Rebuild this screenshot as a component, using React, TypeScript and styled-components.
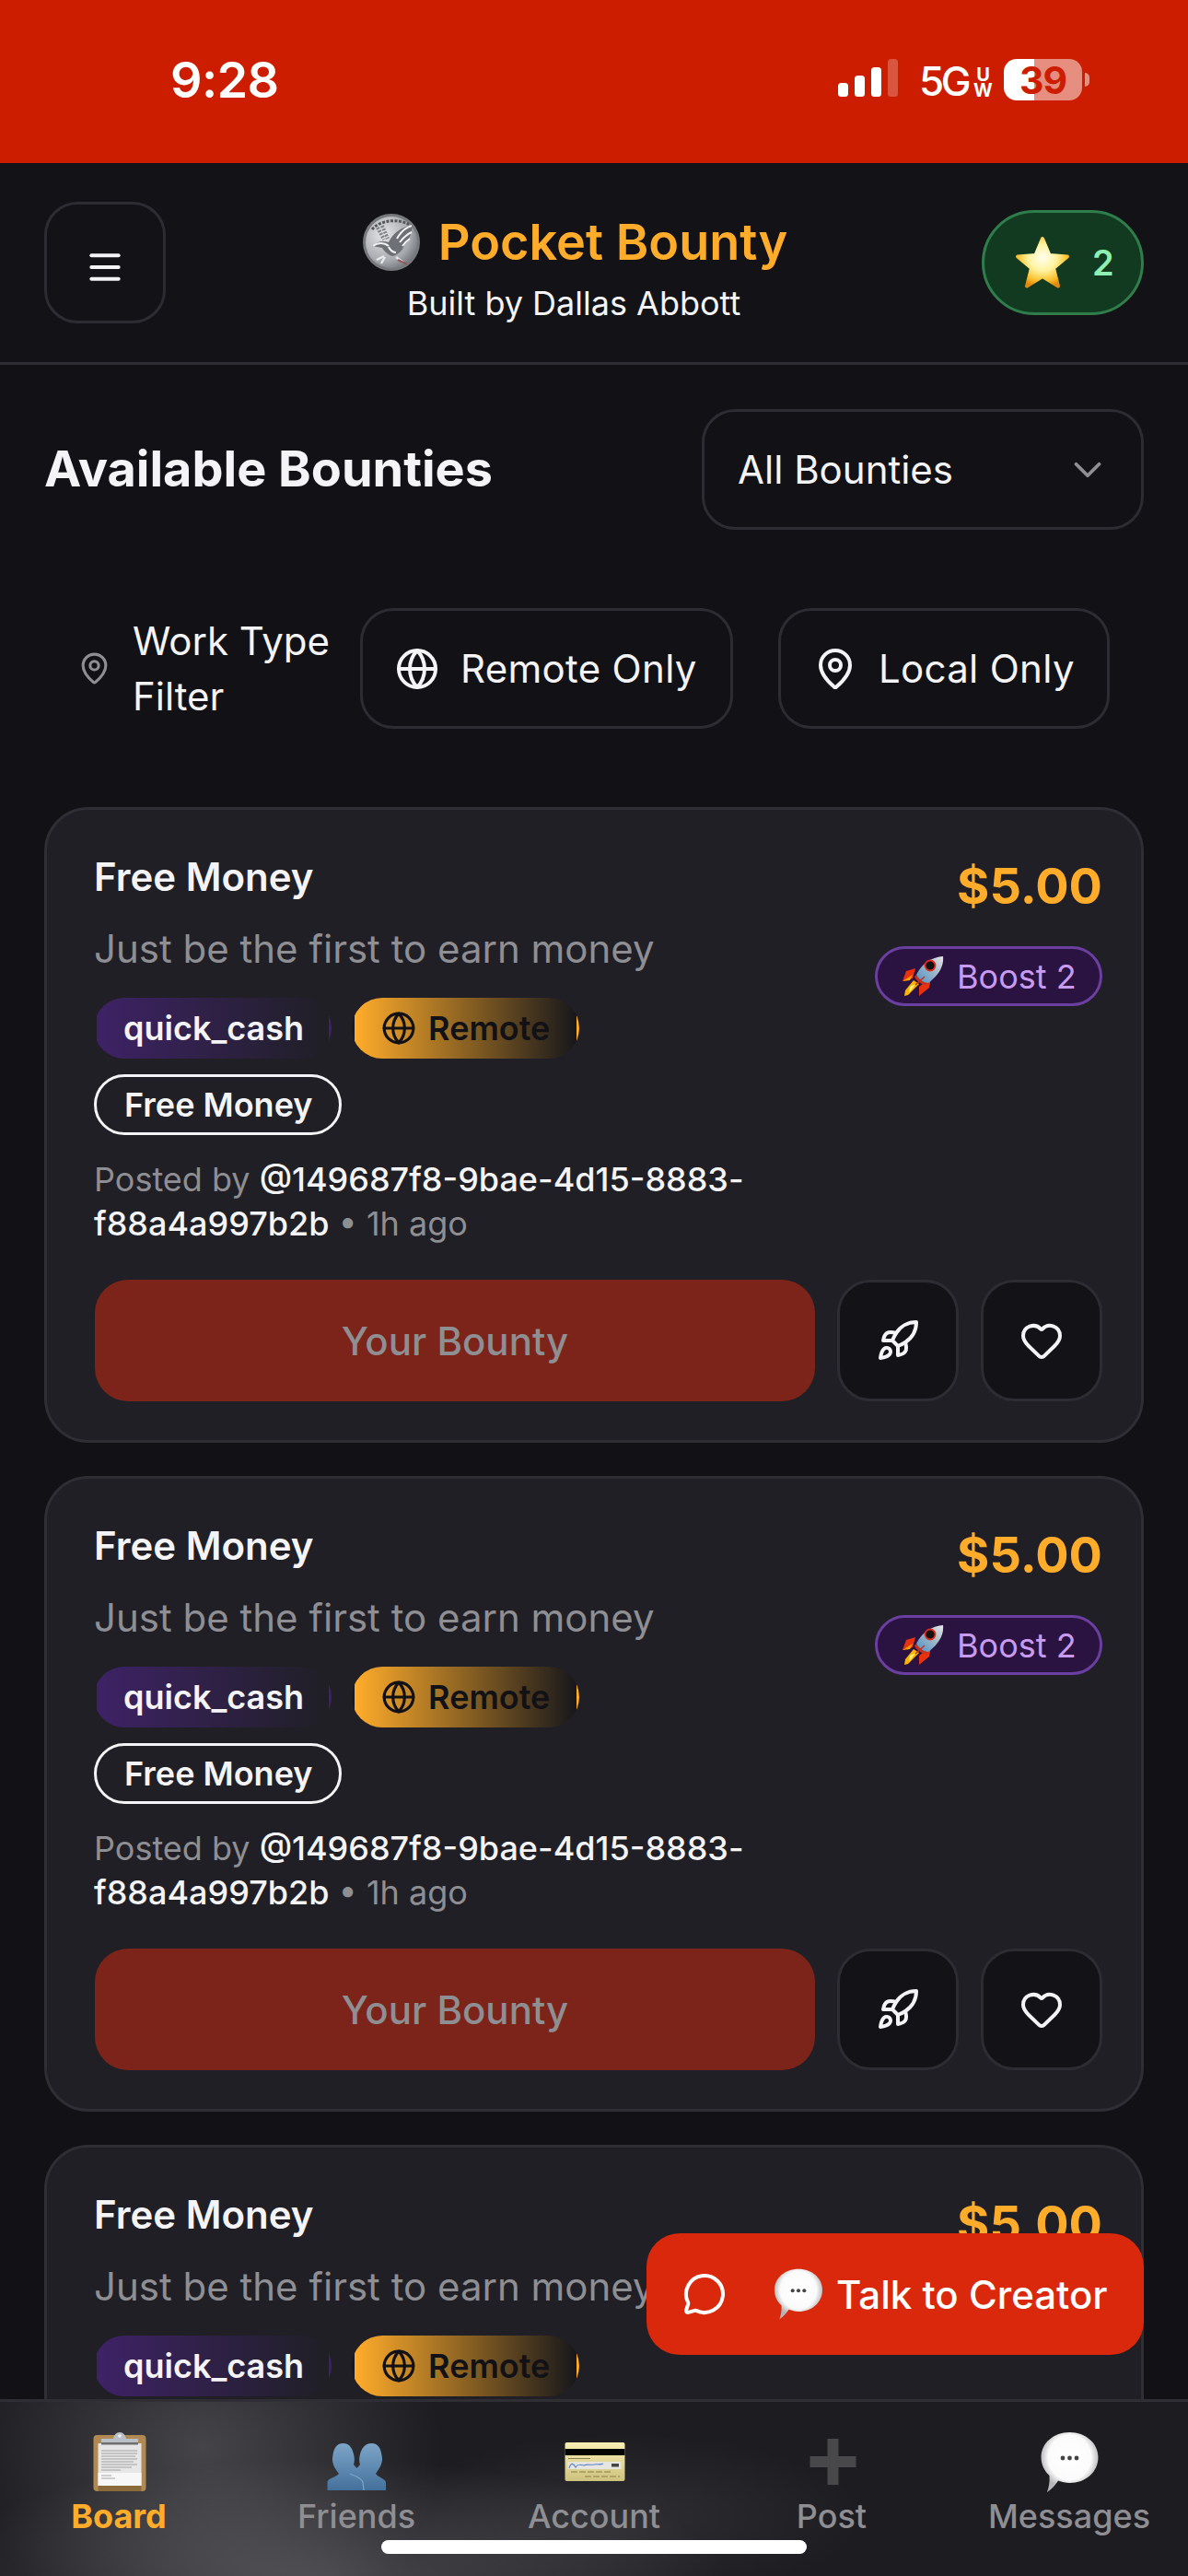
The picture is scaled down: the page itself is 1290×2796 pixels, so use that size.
import React from "react";
import styled, { createGlobalStyle } from "styled-components";
import { ChevronDown, Globe, Heart, MapPin, Menu, MessageCircle, Rocket } from "lucide-react";

const Global = createGlobalStyle`
  html, body { margin: 0; padding: 0; background: #111116; }
  * { box-sizing: border-box; }
  body { font-family: Inter, "Liberation Sans", sans-serif; color: #f4f4f6; }
`;

const Page = styled.div`
  position: relative;
  width: 1290px;
  height: 2796px;
  overflow: hidden;
  background: #111116;
`;

const StatusBar = styled.div`
  height: 177px;
  background: #cc1d00;
  display: flex;
  justify-content: space-between;
  padding: 64px 115px 0 185px;
`;
const Time = styled.div`
  font-size: 54px;
  font-weight: 600;
  line-height: 45px;
  color: #fff;
  letter-spacing: -0.6px;
`;
const StatusRight = styled.div`
  display: flex;
  align-items: flex-start;
  height: 45px;
`;
const Signal = styled.svg`
  width: 65px;
  height: 43px;
`;
const NetLabel = styled.div`
  display: flex;
  align-items: flex-end;
  margin-left: 23px;
  width: 70px;
  height: 43px;
  color: #fff;
`;
const FiveG = styled.span`
  font-size: 44px;
  font-weight: 500;
  line-height: 38px;
  letter-spacing: -3.5px;
`;
const UW = styled.span`
  display: flex;
  flex-direction: column;
  align-items: center;
  font-size: 20px;
  font-weight: 700;
  line-height: 17px;
  margin-left: 6px;
`;
const Battery = styled.div`
  position: relative;
  width: 85px;
  height: 45px;
  margin-left: 22px;
  border-radius: 14px;
  background: linear-gradient(90deg, #fff 0 39%, rgba(255, 255, 255, 0.5) 39%);
  display: flex;
  align-items: center;
  justify-content: center;
  color: #cc1d00;
  font-size: 41px;
  font-weight: 700;
  letter-spacing: -1px;
  &::after {
    content: "";
    position: absolute;
    right: -8px;
    top: 15px;
    width: 5px;
    height: 15px;
    border-radius: 0 5px 5px 0;
    background: rgba(255, 255, 255, 0.5);
  }
`;

const Header = styled.header`
  height: 219px;
  border-bottom: 3px solid #2c2c32;
  background: #121217;
  display: flex;
  align-items: center;
  padding: 0 48px;
`;
const MenuButton = styled.button`
  width: 132px;
  height: 132px;
  flex: none;
  border: 3px solid #2c2c32;
  border-radius: 36px;
  background: transparent;
  color: #f4f4f6;
  display: flex;
  align-items: center;
  justify-content: center;
  padding: 10px 0 0;
`;
const Brand = styled.div`
  flex: 1;
  align-self: flex-start;
  margin-top: 55px;
  display: flex;
  flex-direction: column;
  align-items: center;
`;
const BrandRow = styled.div`
  display: flex;
  align-items: center;
  gap: 20px;
  height: 62px;
  margin-left: 3px;
`;
const BrandTitle = styled.div`
  font-size: 54px;
  font-weight: 600;
  color: #ffac2a;
  line-height: 62px;
`;
const BrandSub = styled.div`
  font-size: 36px;
  line-height: 40px;
  margin-top: 15px;
  color: #f4f4f6;
`;
const Stars = styled.div`
  width: 176px;
  height: 114px;
  flex: none;
  border: 3px solid #2f7d4b;
  border-radius: 57px;
  background: #123a20;
  display: flex;
  align-items: center;
  padding-left: 33px;
  gap: 24px;
  color: #8fefb0;
  font-size: 38px;
  font-weight: 600;
`;

const TitleRow = styled.div`
  display: flex;
  justify-content: space-between;
  align-items: center;
  padding: 0 48px;
  margin-top: 48px;
`;
const Heading = styled.h1`
  margin: 0 0 3px;
  font-size: 54px;
  font-weight: 700;
  color: #f4f4f6;
`;
const Select = styled.div`
  width: 480px;
  height: 131px;
  border: 3px solid #2c2c32;
  border-radius: 36px;
  display: flex;
  align-items: center;
  justify-content: space-between;
  padding: 0 33px 0 36px;
  font-size: 42px;
  color: #f4f4f6;
  svg { color: #8e8e93; }
`;

const FilterRow = styled.div`
  display: flex;
  margin-top: 85px;
  padding-left: 81px;
`;
const FilterLabel = styled.div`
  width: 310px;
  height: 131px;
  display: flex;
  align-items: center;
  gap: 23px;
  padding-left: 3px;
  font-size: 42px;
  line-height: 60px;
  svg { color: #8e8e93; flex: none; }
`;
const FilterText = styled.span`
  width: 247px;
`;
const FilterButton = styled.button<{ $w: number; $ml?: number }>`
  width: ${(p) => p.$w}px;
  height: 131px;
  margin-left: ${(p) => p.$ml ?? 0}px;
  border: 3px solid #2c2c32;
  border-radius: 36px;
  background: transparent;
  color: #f4f4f6;
  font-family: inherit;
  font-size: 42px;
  font-weight: 400;
  letter-spacing: 0.3px;
  display: flex;
  align-items: center;
  gap: 23px;
  padding: 0 0 0 35px;
`;

const List = styled.div`
  display: flex;
  flex-direction: column;
  gap: 36px;
  margin: 85px 48px 0;
`;
const Card = styled.article`
  flex: none;
  height: 690px;
  border: 3px solid #2e2e34;
  border-radius: 48px;
  background: #1f1f25;
  padding: 42px 42px 0 51px;
`;
const CardTop = styled.div`
  display: flex;
  justify-content: space-between;
  height: 431px;
`;
const CardLeft = styled.div`
  width: 780px;
`;
const CardTitle = styled.div`
  font-size: 42px;
  font-weight: 600;
  line-height: 62px;
  color: #f4f4f6;
`;
const CardDesc = styled.div`
  margin-top: 17px;
  font-size: 42px;
  line-height: 60px;
  color: #8e8e93;
`;
const Tags = styled.div`
  display: flex;
  flex-wrap: wrap;
  gap: 17px 22px;
  margin-top: 23px;
`;
const Tag = styled.span<{ $kind: "category" | "remote" | "plain" }>`
  height: 66px;
  border: 3px solid ${(p) => (p.$kind === "plain" ? "#f4f4f6" : "transparent")};
  border-radius: 33px;
  display: inline-flex;
  align-items: center;
  gap: 13px;
  padding: 0 ${(p) => (p.$kind === "remote" ? 29 : p.$kind === "plain" ? 29 : 27)}px 0
    ${(p) => (p.$kind === "plain" ? 30 : 29)}px;
  font-size: 36px;
  font-weight: 600;
  color: ${(p) => (p.$kind === "remote" ? "#111116" : "#f4f4f6")};
  background: ${(p) =>
    p.$kind === "category"
      ? "linear-gradient(90deg, #3e2266, #1f1f25)"
      : p.$kind === "remote"
      ? "linear-gradient(90deg, #ffac2a, #17171b)"
      : "transparent"};
`;
const Posted = styled.div`
  margin-top: 24px;
  font-size: 36px;
  line-height: 48px;
  color: #8e8e93;
`;
const Handle = styled.span`
  color: #f4f4f6;
  font-weight: 500;
`;
const CardRight = styled.div`
  display: flex;
  flex-direction: column;
  align-items: flex-end;
`;
const Price = styled.div`
  font-size: 54px;
  font-weight: 700;
  line-height: 82px;
  color: #ffac2a;
`;
const BoostBadge = styled.div`
  margin-top: 24px;
  height: 65px;
  width: 247px;
  border: 3px solid #6b3fa0;
  border-radius: 33px;
  background: #2a1340;
  display: flex;
  align-items: center;
  padding-left: 27px;
  gap: 14px;
  color: #c99bf0;
  font-size: 36px;
`;
const Actions = styled.div`
  display: flex;
  gap: 24px;
  margin: 37px 0 0 1px;
`;
const OwnButton = styled.button`
  width: 782px;
  height: 132px;
  border: 0;
  border-radius: 36px;
  background: #7c241a;
  color: #8e8e93;
  font-family: inherit;
  font-size: 42px;
  font-weight: 500;
`;
const IconButton = styled.button`
  width: 132px;
  height: 132px;
  flex: none;
  border: 3px solid #2c2c32;
  border-radius: 36px;
  background: #121217;
  color: #f4f4f6;
  display: flex;
  align-items: center;
  justify-content: center;
  padding: 0;
`;

const Fab = styled.button`
  position: absolute;
  left: 702px;
  top: 2424px;
  width: 540px;
  height: 132px;
  border: 0;
  border-radius: 36px;
  background: #d9280c;
  color: #fff;
  font-family: inherit;
  font-size: 42px;
  font-weight: 500;
  display: flex;
  align-items: center;
  padding: 0 0 0 39px;
`;
const FabEmoji = styled.span`
  display: flex;
  margin-left: 49px;
  margin-right: 12px;
`;

const Nav = styled.nav`
  position: absolute;
  left: 0;
  right: 0;
  bottom: 0;
  height: 192px;
  border-top: 3px solid #2e2e34;
  background:
    radial-gradient(ellipse 440px 130px at 350px 192px, rgba(255, 255, 255, 0.2), transparent),
    radial-gradient(ellipse 260px 210px at 220px 50px, rgba(255, 255, 255, 0.18), transparent),
    radial-gradient(ellipse 260px 90px at 680px 125px, rgba(255, 255, 255, 0.08), transparent),
    #1c1c21;
  display: grid;
  grid-template-columns: repeat(5, 1fr);
  padding-top: 31px;
`;
const NavItem = styled.div`
  display: flex;
  flex-direction: column;
  align-items: center;
`;
const NavLabel = styled.span<{ $active?: boolean }>`
  font-size: 36px;
  line-height: 48px;
  font-weight: ${(p) => (p.$active ? 700 : 500)};
  color: ${(p) => (p.$active ? "#ffac2a" : "#8e8e93")};
`;
const HomeIndicator = styled.div`
  position: absolute;
  left: 414px;
  top: 2757px;
  width: 462px;
  height: 15px;
  border-radius: 8px;
  background: #fff;
`;

const Coin = () => (
  <svg width="62" height="62" viewBox="0 0 62 62">
    <defs>
      <radialGradient id="coinG" cx="0.35" cy="0.35" r="0.8">
        <stop offset="0" stopColor="#e4e6e8" />
        <stop offset="0.65" stopColor="#a6a9ad" />
        <stop offset="1" stopColor="#63656a" />
      </radialGradient>
    </defs>
    <circle cx="31" cy="31" r="31" fill="#77797d" />
    <circle cx="31" cy="31" r="28" fill="url(#coinG)" />
    <path d="M10 17 C18 7 40 4 52 13" stroke="#55575b" strokeWidth="3" strokeDasharray="3 1.5" fill="none" />
    <path d="M28 31 C32 22 42 14 54 12 C53 20 51 28 45 34 C43 41 37 45 32 46 C26 44 23 40 21 37 L10 35 C15 30 22 29 28 31 Z" fill="#6d7074" />
    <path d="M37 27 C41 20 46 15 53 13 M40 31 C44 26 48 22 53 20 M43 35 C46 31 48 29 51 27" stroke="#f4f5f6" strokeWidth="2" fill="none" />
    <path d="M11 35 C16 31 23 31 28 35 M28 36 C30 40 33 42 36 42" stroke="#eeeff0" strokeWidth="2.2" fill="none" />
    <path d="M23 46 L15 50 M24 47 L20 54 M36 47 L44 53" stroke="#e8e9ea" strokeWidth="2.4" fill="none" />
    <path d="M38 50 L48 55" stroke="#8d5a5a" strokeWidth="2.2" fill="none" />
    <path d="M16 15 L23 28 M21 13 L27 27" stroke="#7c7f83" strokeWidth="4" strokeDasharray="2 1.5" fill="none" />
  </svg>
);

const StarEmoji = () => (
  <svg width="60" height="58" viewBox="0 0 60 58">
    <defs>
      <radialGradient id="starG" cx="0.5" cy="0.4" r="0.62">
        <stop offset="0" stopColor="#fffef0" />
        <stop offset="0.45" stopColor="#fff3a0" />
        <stop offset="0.8" stopColor="#fbc02d" />
        <stop offset="1" stopColor="#e08a10" />
      </radialGradient>
    </defs>
    <path
      d="M30 3 L37.5 21 L57 22.5 L42 35 L47 54.5 L30 44 L13 54.5 L18 35 L3 22.5 L22.5 21 Z"
      fill="url(#starG)"
      stroke="url(#starG)"
      strokeWidth="4"
      strokeLinejoin="round"
    />
  </svg>
);

const RocketEmoji = () => (
  <svg width="45" height="43" viewBox="0 0 45 43">
    <defs>
      <linearGradient id="rkG" x1="0" y1="1" x2="1" y2="0">
        <stop offset="0" stopColor="#4d90c8" />
        <stop offset="0.55" stopColor="#9fb8c8" />
        <stop offset="1" stopColor="#e8e8e8" />
      </linearGradient>
    </defs>
    <path d="M14 13 L4 16 L0 27 L11 24 Z" fill="#e8320f" />
    <path d="M0 27 L11 20 L8 26 Z" fill="#ffa000" />
    <path d="M31 23 L29 34 L18 43 L18 33 Z" fill="#e8320f" />
    <path d="M12 26 L18 30 L6 42 L2 43 L3 37 Z" fill="#ffb300" />
    <path d="M8 33 L14 30 L7 40 Z" fill="#fff176" />
    <path d="M44 0 C45 9 41 19 28 29 C24 30 16 24 15 20 C22 6 33 1 44 0 Z" fill="url(#rkG)" />
    <path d="M15 20 C17 25 23 29 28 29 L25 31 C21 31 14 26 13 22 Z" fill="#c9301a" />
    <circle cx="30" cy="10" r="5.5" fill="#111" stroke="#e02a1a" strokeWidth="1.8" />
    <path d="M14 31 L24 22" stroke="#c9301a" strokeWidth="1.5" />
  </svg>
);

const Bubble = ({ size = 69, id }: { size?: number; id: string }) => (
  <svg width={size} height={size} viewBox="0 0 69 69">
    <defs>
      <radialGradient id={id} cx="0.5" cy="0.42" r="0.52">
        <stop offset="0" stopColor="#ffffff" />
        <stop offset="0.72" stopColor="#fbfbfb" />
        <stop offset="1" stopColor="#b5b5b5" />
      </radialGradient>
    </defs>
    <path
      d="M34.5 2 C52 2 65.5 14 65.5 29 C65.5 45 52 57 34.5 57 C30 57 26 56 22 54.5 C19 59 16 63 10 67 C12 61 13 56 12.5 49 C7 44 3.5 37 3.5 29 C3.5 14 17 2 34.5 2 Z"
      fill={`url(#${id})`}
    />
    <circle cx="27" cy="30" r="2.4" fill="#444" />
    <circle cx="34.5" cy="30" r="2.4" fill="#444" />
    <circle cx="42" cy="30" r="2.4" fill="#444" />
  </svg>
);

const Clipboard = () => (
  <svg width="69" height="69" viewBox="0 0 69 69">
    <rect x="6.5" y="5" width="57" height="61" rx="4" fill="#b08a52" />
    <rect x="11.5" y="14" width="47" height="46" fill="#e6e6e6" />
    <path d="M11.5 46 H58.5 V60 H11.5 Z" fill="#f7f7f7" />
    <path d="M11.5 60 H58.5 V66 H11.5 Z" fill="#8a6a3a" />
    <path d="M15 22 H54 M15 25 H54 M15 28 H52 M15 31 H54 M15 34 H50 M15 37 H54 M15 40 H48 M15 43 H36 M15 49 H26 M15 52 H30" stroke="#9a9a9a" strokeWidth="0.9" />
    <path d="M15 13 L15 9 H28 C29 5 31 2 35 2 C39 2 41 5 42 9 H55 L55 13 Z" fill="#b9bfc6" />
    <rect x="15" y="13" width="40" height="2.5" fill="#6f6f6f" />
    <circle cx="35" cy="6" r="1.8" fill="#eef2f6" />
  </svg>
);

const Busts = () => (
  <svg width="69" height="69" viewBox="0 0 69 69">
    <defs>
      <linearGradient id="bustG" x1="0" y1="0" x2="0" y2="1">
        <stop offset="0" stopColor="#7ca5c7" />
        <stop offset="1" stopColor="#44709c" />
      </linearGradient>
    </defs>
    <path
      d="M2.5 65 V56 C2.5 52 12 51 15 47 C11 42 7.5 36 8 30 C9 20 12 14 19.5 14 C27 14 30 20 31.5 28 C32 31 32 34 31 37 L34.5 41 L38 37 C37 34 37 31 37.5 28 C39 20 43 14 50.5 14 C58 14 61 20 62 30 C62.5 36 58.5 42 55 47 C57 51 66 52 66 57 V65 Z"
      fill="url(#bustG)"
    />
    <path d="M27 47 C33 50 38 50 41 56 L42 65" stroke="#7ca5c7" strokeWidth="1.2" fill="none" />
  </svg>
);

const CreditCard = () => (
  <svg width="69" height="69" viewBox="0 0 69 69">
    <defs>
      <linearGradient id="cardG" x1="0" y1="0" x2="0" y2="1">
        <stop offset="0" stopColor="#f8efb4" />
        <stop offset="1" stopColor="#cfc27e" />
      </linearGradient>
    </defs>
    <rect x="2.5" y="13" width="65" height="42" rx="2" fill="url(#cardG)" />
    <rect x="2.5" y="20" width="65" height="7" fill="#050505" />
    <rect x="5.5" y="34" width="58" height="8" fill="#e6e6e0" />
    <path d="M7 41 C9 34 12 36 14 40 C17 35 20 38 23 38 C27 36 30 38 34 37 C37 36 40 38 44 36" stroke="#5f83c8" strokeWidth="1.1" fill="none" />
    <rect x="53" y="36" width="8" height="3.5" fill="#444" />
    <path d="M9 45 H52 M24 50 H62" stroke="#b0a566" strokeWidth="2" strokeDasharray="7 2" />
    <path d="M6 30.5 H30" stroke="#8b8250" strokeWidth="1" />
  </svg>
);

const Plus = () => (
  <svg width="69" height="69" viewBox="0 0 69 69">
    <path d="M29.5 9 H41.5 V28 H60.5 V40 H41.5 V59 H29.5 V40 H10.5 V28 H29.5 Z" fill="#48484a" />
  </svg>
);

const BountyCard = () => (
  <Card>
    <CardTop>
      <CardLeft>
        <CardTitle>Free Money</CardTitle>
        <CardDesc>Just be the first to earn money</CardDesc>
        <Tags>
          <Tag $kind="category">quick_cash</Tag>
          <Tag $kind="remote">
            <Globe size={38} strokeWidth={2} />
            Remote
          </Tag>
          <Tag $kind="plain">Free Money</Tag>
        </Tags>
        <Posted>
          Posted by <Handle>@149687f8-9bae-4d15-8883-f88a4a997b2b</Handle> • 1h ago
        </Posted>
      </CardLeft>
      <CardRight>
        <Price>$5.00</Price>
        <BoostBadge>
          <RocketEmoji />
          Boost 2
        </BoostBadge>
      </CardRight>
    </CardTop>
    <Actions>
      <OwnButton>Your Bounty</OwnButton>
      <IconButton>
        <Rocket size={48} strokeWidth={2} />
      </IconButton>
      <IconButton>
        <Heart size={48} strokeWidth={2} />
      </IconButton>
    </Actions>
  </Card>
);

export default function App() {
  return (
    <Page>
      <Global />
      <StatusBar>
        <Time>9:28</Time>
        <StatusRight>
          <Signal viewBox="0 0 65 43">
            <rect x="0" y="26" width="11" height="15" rx="3.5" fill="#fff" />
            <rect x="18" y="18" width="11" height="23" rx="3.5" fill="#fff" />
            <rect x="36" y="9" width="11" height="32" rx="3.5" fill="#fff" />
            <rect x="54" y="0" width="11" height="41" rx="3.5" fill="#fff" opacity="0.25" />
          </Signal>
          <NetLabel>
            <FiveG>5G</FiveG>
            <UW>
              <span>U</span>
              <span>W</span>
            </UW>
          </NetLabel>
          <Battery>39</Battery>
        </StatusRight>
      </StatusBar>

      <Header>
        <MenuButton>
          <Menu size={44} strokeWidth={2.2} />
        </MenuButton>
        <Brand>
          <BrandRow>
            <Coin />
            <BrandTitle>Pocket Bounty</BrandTitle>
          </BrandRow>
          <BrandSub>Built by Dallas Abbott</BrandSub>
        </Brand>
        <Stars>
          <StarEmoji />2
        </Stars>
      </Header>

      <TitleRow>
        <Heading>Available Bounties</Heading>
        <Select>
          All Bounties
          <ChevronDown size={50} strokeWidth={1.8} />
        </Select>
      </TitleRow>

      <FilterRow>
        <FilterLabel>
          <MapPin size={37} strokeWidth={2} />
          <FilterText>Work Type Filter</FilterText>
        </FilterLabel>
        <FilterButton $w={405}>
          <Globe size={48} strokeWidth={2} />
          Remote Only
        </FilterButton>
        <FilterButton $w={360} $ml={49}>
          <MapPin size={48} strokeWidth={2} />
          Local Only
        </FilterButton>
      </FilterRow>

      <List>
        <BountyCard />
        <BountyCard />
        <BountyCard />
      </List>

      <Fab>
        <MessageCircle size={48} strokeWidth={2} />
        <FabEmoji>
          <Bubble size={58} id="bubbleFab" />
        </FabEmoji>
        Talk to Creator
      </Fab>

      <Nav>
        <NavItem>
          <Clipboard />
          <NavLabel $active>Board</NavLabel>
        </NavItem>
        <NavItem>
          <Busts />
          <NavLabel>Friends</NavLabel>
        </NavItem>
        <NavItem>
          <CreditCard />
          <NavLabel>Account</NavLabel>
        </NavItem>
        <NavItem>
          <Plus />
          <NavLabel>Post</NavLabel>
        </NavItem>
        <NavItem>
          <Bubble id="bubbleNav" />
          <NavLabel>Messages</NavLabel>
        </NavItem>
      </Nav>
      <HomeIndicator />
    </Page>
  );
}
